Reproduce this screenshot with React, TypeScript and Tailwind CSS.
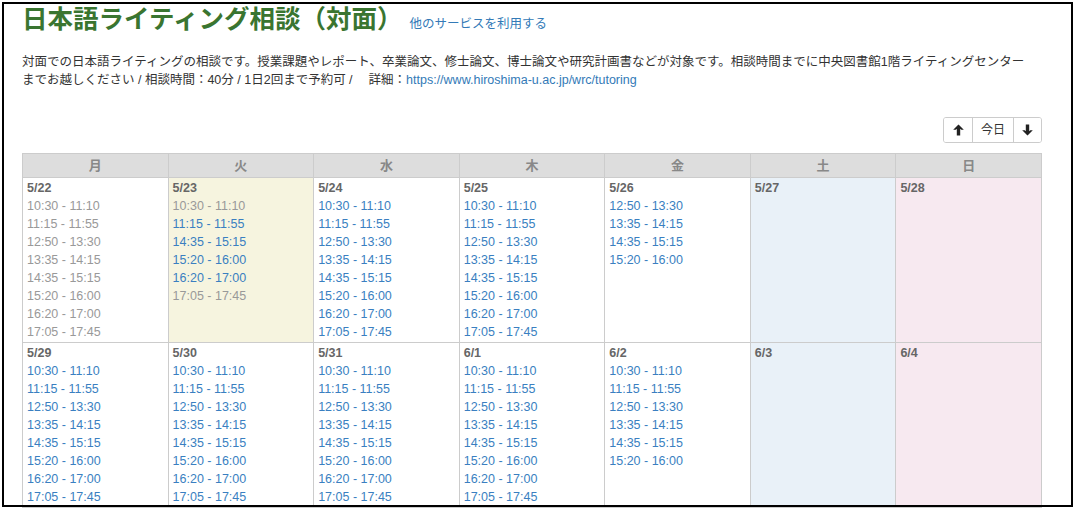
import React from 'react';

type Slot = { time: string; open: boolean };
type Day = { date: string; kind?: 'today' | 'sat' | 'sun'; slots: Slot[] };

const ALL = [
  '10:30 - 11:10',
  '11:15 - 11:55',
  '12:50 - 13:30',
  '13:35 - 14:15',
  '14:35 - 15:15',
  '15:20 - 16:00',
  '16:20 - 17:00',
  '17:05 - 17:45',
];

const open = (times: string[]): Slot[] => times.map(time => ({ time, open: true }));
const closed = (times: string[]): Slot[] => times.map(time => ({ time, open: false }));

const weeks: Day[][] = [
  [
    { date: '5/22', slots: closed(ALL) },
    {
      date: '5/23',
      kind: 'today',
      slots: [
        { time: '10:30 - 11:10', open: false },
        { time: '11:15 - 11:55', open: true },
        { time: '14:35 - 15:15', open: true },
        { time: '15:20 - 16:00', open: true },
        { time: '16:20 - 17:00', open: true },
        { time: '17:05 - 17:45', open: false },
      ],
    },
    { date: '5/24', slots: open(ALL) },
    { date: '5/25', slots: open(ALL) },
    { date: '5/26', slots: open(['12:50 - 13:30', '13:35 - 14:15', '14:35 - 15:15', '15:20 - 16:00']) },
    { date: '5/27', kind: 'sat', slots: [] },
    { date: '5/28', kind: 'sun', slots: [] },
  ],
  [
    { date: '5/29', slots: open(ALL) },
    { date: '5/30', slots: open(ALL) },
    { date: '5/31', slots: open(ALL) },
    { date: '6/1', slots: open(ALL) },
    { date: '6/2', slots: open(ALL.slice(0, 6)) },
    { date: '6/3', kind: 'sat', slots: [] },
    { date: '6/4', kind: 'sun', slots: [] },
  ],
];

const dayNames = ['月', '火', '水', '木', '金', '土', '日'];

const cellBg = (kind?: Day['kind']) => {
  if (kind === 'today') return 'bg-[#f6f4df]';
  if (kind === 'sat') return 'bg-[#e9f1f8]';
  if (kind === 'sun') return 'bg-[#f7e9f0]';
  return 'bg-white';
};

const ArrowUp = () => (
  <svg width="11" height="12" viewBox="0 0 11 12" fill="#222">
    <path d="M5.5 0.5 L10.8 5.8 L8.2 5.8 L7.2 4.8 L7.2 11.5 L3.8 11.5 L3.8 4.8 L2.8 5.8 L0.2 5.8 Z" />
  </svg>
);

const ArrowDown = () => (
  <svg width="11" height="12" viewBox="0 0 11 12" fill="#222">
    <path d="M5.5 11.5 L10.8 6.2 L8.2 6.2 L7.2 7.2 L7.2 0.5 L3.8 0.5 L3.8 7.2 L2.8 6.2 L0.2 6.2 Z" />
  </svg>
);

export default function App() {
  return (
    <div
      className="relative min-h-[510px] bg-white text-[#333]"
      style={{ fontFamily: '"Liberation Sans", Arial, "Noto Sans CJK JP", sans-serif' }}
    >
      <div className="w-[1042px] pl-[22px]">
        {/* heading */}
        <div className="flex items-baseline pt-[4px]">
          <h1 className="text-[25.5px] font-bold leading-[30px] text-[#3a7530]">
            日本語ライティング相談（対面）
          </h1>
          <a href="#" className="ml-[7px] text-[12.5px] text-[#337ab7]">
            他のサービスを利用する
          </a>
        </div>

        <p className="mt-[19px] w-[1014px] text-[12.5px] leading-[18px] text-[#333]">
          対面での日本語ライティングの相談です。授業課題やレポート、卒業論文、修士論文、博士論文や研究計画書などが対象です。相談時間までに中央図書館1階ライティングセンターまでお越しください / 相談時間：40分 / 1日2回まで予約可 /　 詳細：
          <a href="#" className="text-[#337ab7]">
            https://www.hiroshima-u.ac.jp/wrc/tutoring
          </a>
        </p>

        {/* nav buttons */}
        <div className="mt-[28px] flex justify-end">
          <div className="flex h-[26px] overflow-hidden rounded-[3px] border border-[#ccc] text-[12px] text-[#333]">
            <button className="flex w-[28px] items-center justify-center bg-white">
              <ArrowUp />
            </button>
            <button className="flex w-[41px] items-center justify-center border-l border-[#ccc] bg-white">
              今日
            </button>
            <button className="flex w-[28px] items-center justify-center border-l border-[#ccc] bg-white">
              <ArrowDown />
            </button>
          </div>
        </div>

        {/* calendar */}
        <table className="mt-[10px] w-full table-fixed border-collapse">
          <thead>
            <tr>
              {dayNames.map(d => (
                <th
                  key={d}
                  className="h-[24px] border border-[#ccc] bg-[#dddddd] p-0 text-center text-[13px] font-bold text-[#888]"
                >
                  {d}
                </th>
              ))}
            </tr>
          </thead>
          <tbody>
            {weeks.map((week, wi) => (
              <tr key={wi}>
                {week.map(day => (
                  <td
                    key={day.date}
                    className={`border border-[#ccc] px-[4px] pt-[1px] pb-[1px] align-top text-[12.5px] leading-[18px] ${cellBg(day.kind)}`}
                  >
                    <div className="font-bold text-[#666]">{day.date}</div>
                    {day.slots.map(s => (
                      <div key={s.time} className={s.open ? 'text-[#3a7fc1]' : 'text-[#999]'}>
                        {s.time}
                      </div>
                    ))}
                    {/* keep rows the same height as a full day */}
                    {Array.from({ length: 8 - day.slots.length }).map((_, i) => (
                      <div key={i} className="h-[18px]" />
                    ))}
                  </td>
                ))}
              </tr>
            ))}
          </tbody>
        </table>
      </div>

      {/* window frame drawn over the page */}
      <div className="pointer-events-none absolute left-[2px] top-[2px] h-[505px] w-[1071px] border-2 border-black" />
    </div>
  );
}
